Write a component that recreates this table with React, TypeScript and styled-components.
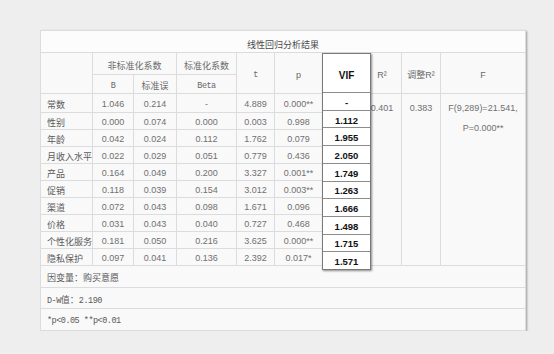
import styled, { createGlobalStyle } from "styled-components";

const GlobalStyle = createGlobalStyle`
  body {
    margin: 0;
    background: #eeeeee;
  }
`;

const sans = `"Liberation Sans", "Noto Sans CJK SC", sans-serif`;
const mono = `"Liberation Mono", "Noto Sans CJK SC", monospace`;

const Page = styled.div`
  padding: 30px 0 0 40px;
`;

const Panel = styled.div`
  position: relative;
  width: 485px;
  background: #f9f9f9;
  box-shadow: 2px 1px 2px rgba(0, 0, 0, 0.35);
`;

const Table = styled.table`
  width: 485px;
  border-collapse: collapse;
  table-layout: fixed;
  font-family: ${sans};
  font-size: 9px;
  color: #707070;
  border: 1px solid #d4d4d4;
`;

const Row = styled.tr<{ $h: number }>`
  height: ${(p) => p.$h}px;
`;

const Cell = styled.td<{ $top?: boolean }>`
  border: 1px solid #dcdcdc;
  padding: 2px 0 0;
  text-align: center;
  white-space: nowrap;
  vertical-align: ${(p) => (p.$top ? "top" : "middle")};
`;

const HeadCell = styled.th`
  border: 1px solid #dcdcdc;
  padding: 3px 0 0;
  text-align: center;
  white-space: nowrap;
  font-weight: normal;
  color: #6a6a6a;
`;

const TitleCell = styled.th`
  border: 1px solid #dcdcdc;
  padding: 5px 0 0;
  background: #fcfcfc;
  font-weight: normal;
  color: #4a4a4a;
  font-size: 9px;
`;

const Label = styled(Cell)`
  text-align: left;
  padding-left: 6px;
  color: #5a5a5a;
`;

const Summary = styled(Cell)`
  padding-top: 4px;
  line-height: 20px;
  white-space: normal;
`;

const Note = styled.td`
  border: 1px solid #dcdcdc;
  padding: 2px 0 0 6px;
  color: #5a5a5a;
  white-space: nowrap;
`;

const Mono = styled.span`
  font-family: ${mono};
  font-size: 8.5px;
  letter-spacing: -0.5px;
`;

const VifBox = styled.div`
  position: absolute;
  left: 282px;
  top: 23px;
  width: 49px;
  height: 217px;
  display: flex;
  flex-direction: column;
  background: #ffffff;
  border: 1px solid #7a7a7a;
  box-sizing: border-box;
  box-shadow: 1px 1px 2px rgba(0, 0, 0, 0.45);
  font-family: ${sans};
  font-weight: bold;
  color: #111111;
`;

const VifHead = styled.div`
  height: 38px;
  display: flex;
  align-items: center;
  justify-content: center;
  padding-top: 4px;
  box-sizing: border-box;
  font-size: 10px;
`;

const VifCell = styled.div`
  flex: 1;
  display: flex;
  align-items: center;
  justify-content: center;
  padding-top: 2px;
  border-top: 1px solid #8c8c8c;
  font-size: 9.5px;
`;

const widths = [52, 41, 43, 60, 38, 48, 40, 39, 39, 85];

const rows = [
  ["常数", "1.046", "0.214", "-", "4.889", "0.000**", "-"],
  ["性别", "0.000", "0.074", "0.000", "0.003", "0.998", "1.112"],
  ["年龄", "0.042", "0.024", "0.112", "1.762", "0.079", "1.955"],
  ["月收入水平", "0.022", "0.029", "0.051", "0.779", "0.436", "2.050"],
  ["产品", "0.164", "0.049", "0.200", "3.327", "0.001**", "1.749"],
  ["促销", "0.118", "0.039", "0.154", "3.012", "0.003**", "1.263"],
  ["渠道", "0.072", "0.043", "0.098", "1.671", "0.096", "1.666"],
  ["价格", "0.031", "0.043", "0.040", "0.727", "0.468", "1.498"],
  ["个性化服务", "0.181", "0.050", "0.216", "3.625", "0.000**", "1.715"],
  ["隐私保护", "0.097", "0.041", "0.136", "2.392", "0.017*", "1.571"],
];

export default function App() {
  return (
    <Page>
      <GlobalStyle />
      <Panel>
        <Table>
          <colgroup>
            {widths.map((w, i) => (
              <col key={i} style={{ width: w }} />
            ))}
          </colgroup>
          <thead>
            <Row $h={22}>
              <TitleCell colSpan={10}>线性回归分析结果</TitleCell>
            </Row>
            <Row $h={22}>
              <HeadCell rowSpan={2} />
              <HeadCell colSpan={2}>非标准化系数</HeadCell>
              <HeadCell>标准化系数</HeadCell>
              <HeadCell rowSpan={2}>
                <Mono>t</Mono>
              </HeadCell>
              <HeadCell rowSpan={2}>p</HeadCell>
              <HeadCell rowSpan={2} />
              <HeadCell rowSpan={2}>R²</HeadCell>
              <HeadCell rowSpan={2}>调整R²</HeadCell>
              <HeadCell rowSpan={2}>F</HeadCell>
            </Row>
            <Row $h={19}>
              <HeadCell>
                <Mono>B</Mono>
              </HeadCell>
              <HeadCell>标准误</HeadCell>
              <HeadCell>
                <Mono>Beta</Mono>
              </HeadCell>
            </Row>
          </thead>
          <tbody>
            {rows.map((r, i) => (
              <Row key={r[0]} $h={i === 0 ? 19 : 17}>
                <Label>{r[0]}</Label>
                {r.slice(1, 6).map((v, j) => (
                  <Cell key={j}>{v}</Cell>
                ))}
                <Cell />
                {i === 0 && (
                  <>
                    <Summary rowSpan={10} $top>
                      0.401
                    </Summary>
                    <Summary rowSpan={10} $top>
                      0.383
                    </Summary>
                    <Summary rowSpan={10} $top>
                      F(9,289)=21.541,
                      <br />
                      P=0.000**
                    </Summary>
                  </>
                )}
              </Row>
            ))}
            <Row $h={22}>
              <Note colSpan={10}>因变量：购买意愿</Note>
            </Row>
            <Row $h={21}>
              <Note colSpan={10}>
                <Mono>D-W</Mono>值：<Mono>2.190</Mono>
              </Note>
            </Row>
            <Row $h={22}>
              <Note colSpan={10}>
                <Mono>*p&lt;0.05 **p&lt;0.01</Mono>
              </Note>
            </Row>
          </tbody>
        </Table>
        <VifBox>
          <VifHead>VIF</VifHead>
          {rows.map((r) => (
            <VifCell key={r[0]}>{r[6]}</VifCell>
          ))}
        </VifBox>
      </Panel>
    </Page>
  );
}
